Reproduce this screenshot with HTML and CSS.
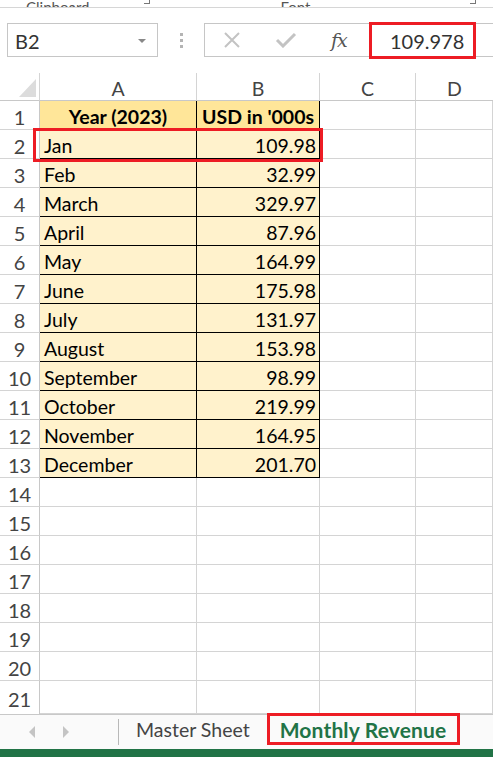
FILE: index.html
```html
<!DOCTYPE html>
<html lang="en">

<head>
   <meta charset="UTF-8">
   <meta name="viewport" content="width=device-width, initial-scale=1.0">
   <title>Monthly Revenue</title>

   <link rel="stylesheet" href="styles.css">
</head>

<body>
   <div class="ribbon">
      <span class="ribbon__label ribbon__clip">Clipboard</span>
      <span class="ribbon__launch ribbon__launch--1"></span>
      <span class="ribbon__label ribbon__font">Font</span>
      <span class="ribbon__launch ribbon__launch--2"></span>
   </div>

   <div class="formula">
      <div class="namebox">
         <span>B2</span>
         <span class="namebox__arrow"></span>
      </div>

      <div class="grip">
         <span></span><span></span><span></span>
      </div>

      <div class="formula__buttons">
         <svg class="formula__icon" width="20" height="16" viewBox="0 0 20 16">
            <path d="M3 1 L17 15 M17 1 L3 15" stroke="#c3c3c3" stroke-width="2" fill="none" />
         </svg>
         <svg class="formula__icon" width="22" height="16" viewBox="0 0 22 16">
            <path d="M2 8 L8 14 L20 2" stroke="#c3c3c3" stroke-width="3" fill="none" />
         </svg>
         <span class="formula__fx">fx</span>
      </div>

      <div class="formula__input">
         <span class="formula__value">109.978</span>
         <div class="mark mark--value"></div>
      </div>
   </div>

   <div class="sheet">
      <div class="corner">
         <svg width="17" height="18" viewBox="0 0 17 18">
            <polygon points="0,18 17,18 17,0" fill="#dcdcdc" />
         </svg>
      </div>
      <div class="col__head">A</div>
      <div class="col__head">B</div>
      <div class="col__head">C</div>
      <div class="col__head col__head--last">D</div>

      <div class="row__head">1</div>
      <div class="cell t th">Year (2023)</div>
      <div class="cell t th">USD in '000s</div>
      <div class="cell"></div>
      <div class="cell cell--last"></div>

      <div class="row__head">2</div>
      <div class="cell t">Jan</div>
      <div class="cell t num">109.98</div>
      <div class="cell"></div>
      <div class="cell cell--last"></div>

      <div class="row__head">3</div>
      <div class="cell t">Feb</div>
      <div class="cell t num">32.99</div>
      <div class="cell"></div>
      <div class="cell cell--last"></div>

      <div class="row__head">4</div>
      <div class="cell t">March</div>
      <div class="cell t num">329.97</div>
      <div class="cell"></div>
      <div class="cell cell--last"></div>

      <div class="row__head">5</div>
      <div class="cell t">April</div>
      <div class="cell t num">87.96</div>
      <div class="cell"></div>
      <div class="cell cell--last"></div>

      <div class="row__head">6</div>
      <div class="cell t">May</div>
      <div class="cell t num">164.99</div>
      <div class="cell"></div>
      <div class="cell cell--last"></div>

      <div class="row__head">7</div>
      <div class="cell t">June</div>
      <div class="cell t num">175.98</div>
      <div class="cell"></div>
      <div class="cell cell--last"></div>

      <div class="row__head">8</div>
      <div class="cell t">July</div>
      <div class="cell t num">131.97</div>
      <div class="cell"></div>
      <div class="cell cell--last"></div>

      <div class="row__head">9</div>
      <div class="cell t">August</div>
      <div class="cell t num">153.98</div>
      <div class="cell"></div>
      <div class="cell cell--last"></div>

      <div class="row__head">10</div>
      <div class="cell t">September</div>
      <div class="cell t num">98.99</div>
      <div class="cell"></div>
      <div class="cell cell--last"></div>

      <div class="row__head">11</div>
      <div class="cell t">October</div>
      <div class="cell t num">219.99</div>
      <div class="cell"></div>
      <div class="cell cell--last"></div>

      <div class="row__head">12</div>
      <div class="cell t">November</div>
      <div class="cell t num">164.95</div>
      <div class="cell"></div>
      <div class="cell cell--last"></div>

      <div class="row__head">13</div>
      <div class="cell t">December</div>
      <div class="cell t num">201.70</div>
      <div class="cell"></div>
      <div class="cell cell--last"></div>

      <div class="row__head">14</div>
      <div class="cell"></div><div class="cell"></div><div class="cell"></div><div class="cell cell--last"></div>
      <div class="row__head">15</div>
      <div class="cell"></div><div class="cell"></div><div class="cell"></div><div class="cell cell--last"></div>
      <div class="row__head">16</div>
      <div class="cell"></div><div class="cell"></div><div class="cell"></div><div class="cell cell--last"></div>
      <div class="row__head">17</div>
      <div class="cell"></div><div class="cell"></div><div class="cell"></div><div class="cell cell--last"></div>
      <div class="row__head">18</div>
      <div class="cell"></div><div class="cell"></div><div class="cell"></div><div class="cell cell--last"></div>
      <div class="row__head">19</div>
      <div class="cell"></div><div class="cell"></div><div class="cell"></div><div class="cell cell--last"></div>
      <div class="row__head">20</div>
      <div class="cell"></div><div class="cell"></div><div class="cell"></div><div class="cell cell--last"></div>
      <div class="row__head row__head--end">21</div>
      <div class="cell cell--end"></div><div class="cell cell--end"></div><div class="cell cell--end"></div><div class="cell cell--last cell--end"></div>

      <div class="mark mark--cell"></div>
   </div>

   <div class="tabs">
      <div class="tabs__nav">
         <span class="tabs__arrow tabs__arrow--left"></span>
         <span class="tabs__arrow tabs__arrow--right"></span>
      </div>
      <div class="tabs__sep"></div>
      <div class="tab">Master Sheet</div>
      <div class="tab tab--active">
         Monthly Revenue
         <div class="mark mark--tab"></div>
      </div>
   </div>

   <div class="status"></div>
</body>

</html>
```

FILE: styles.css
```css
* {
   box-sizing: border-box;
   margin: 0;
   padding: 0;
}

body {
   width: 493px;
   height: 757px;
   overflow: hidden;
   display: flex;
   flex-direction: column;
   background-color: #fff;
   font-family: "Lato", "Open Sans", sans-serif;
   color: #000;
}

/* ribbon leftover at the very top */
.ribbon {
   height: 8px;
   flex-shrink: 0;
   border-bottom: 1px solid #d6d6d6;
   overflow: hidden;
   display: flex;
   align-items: flex-end;
   color: #555;
   font-size: 15px;
}

.ribbon__label {
   line-height: 18px;
   margin-bottom: -9px;
}

.ribbon__clip {
   margin-left: 26px;
}

.ribbon__font {
   margin-left: 131px;
}

.ribbon__launch {
   width: 6px;
   height: 5px;
   border-right: 1px solid #777;
   border-bottom: 1px solid #777;
   margin-bottom: 3px;
}

.ribbon__launch--1 {
   margin-left: 54px;
}

.ribbon__launch--2 {
   margin-left: 160px;
}

/* name box + formula bar */
.formula {
   display: flex;
   align-items: flex-start;
   padding: 15px 0 0 7px;
   height: 49px;
   flex-shrink: 0;
}

.namebox {
   width: 151px;
   height: 34px;
   border: 1px solid #c6c6c6;
   display: flex;
   align-items: center;
   justify-content: space-between;
   padding: 2px 11px 0 7px;
   font-size: 20px;
   color: #333;
}

.namebox__arrow {
   border-left: 4px solid transparent;
   border-right: 4px solid transparent;
   border-top: 4px solid #888;
}

.grip {
   width: 46px;
   height: 34px;
   display: flex;
   flex-direction: column;
   align-items: center;
   justify-content: center;
   gap: 3px;
}

.grip span {
   width: 3px;
   height: 3px;
   background-color: #b4b4b4;
}

.formula__buttons {
   width: 165px;
   height: 34px;
   border: 1px solid #c6c6c6;
   border-right: none;
   display: flex;
   align-items: center;
   padding-left: 17px;
   gap: 33px;
}

.formula__fx {
   font-family: "DejaVu Serif", "Liberation Serif", serif;
   font-style: italic;
   font-size: 19px;
   color: #555;
   margin-left: 1px;
   letter-spacing: -1px;
}

.formula__input {
   position: relative;
   flex: 1;
   height: 34px;
   border: 1px solid #c6c6c6;
   border-right: none;
   display: flex;
   align-items: center;
   padding: 2px 0 0 20px;
   font-size: 20px;
   color: #333;
}

/* red annotation boxes */
.mark {
   position: absolute;
   border: 3px solid #ed1c24;
   pointer-events: none;
}

.mark--value {
   top: -2px;
   left: -1px;
   width: 107px;
   height: 37px;
}

.mark--cell {
   top: 55px;
   left: 33px;
   width: 290px;
   height: 34px;
}

.mark--tab {
   top: -4px;
   left: 0;
   width: 193px;
   height: 32px;
}

/* the grid */
.sheet {
   position: relative;
   flex: 1;
   margin-top: 16px;
   display: grid;
   grid-template-columns: 40px 157px 123px 96px 1fr;
   grid-template-rows: 28px repeat(20, 29px) 1fr;
   font-size: 19.5px;
}

.corner {
   border-right: 1px solid #d4d4d4;
   border-bottom: 1px solid #c8c8c8;
   display: flex;
   align-items: flex-end;
   justify-content: flex-end;
   padding: 0 3px 3px 0;
}

.col__head {
   border-right: 1px solid #d4d4d4;
   border-bottom: 1px solid #c8c8c8;
   display: flex;
   align-items: center;
   justify-content: center;
   padding-top: 4px;
   color: #444;
}

.col__head--last,
.cell--last {
   border-right: none;
}

.row__head {
   border-right: 1px solid #c8c8c8;
   border-bottom: 1px solid #d4d4d4;
   display: flex;
   align-items: center;
   justify-content: center;
   padding-top: 3px;
   color: #444;
   font-size: 20px;
}

.row__head--end,
.cell--end {
   border-bottom: none;
}

.cell {
   border-right: 1px solid #d4d4d4;
   border-bottom: 1px solid #d4d4d4;
   display: flex;
   align-items: center;
   padding: 3px 4px 0;
   white-space: nowrap;
}

.t {
   background-color: #fff2cc;
   border-color: #000;
}

.th {
   background-color: #ffe699;
   font-weight: 700;
   justify-content: center;
}

.num {
   justify-content: flex-end;
   padding-right: 3px;
}

/* sheet tabs */
.tabs {
   height: 35px;
   flex-shrink: 0;
   border-top: 1px solid #c8c8c8;
   background-color: #fafafa;
   display: flex;
   align-items: center;
}

.tabs__nav {
   width: 118px;
   display: flex;
   align-items: center;
   padding-left: 29px;
   gap: 28px;
}

.tabs__arrow {
   border-top: 6px solid transparent;
   border-bottom: 6px solid transparent;
}

.tabs__arrow--left {
   border-right: 6px solid #c4c4c4;
}

.tabs__arrow--right {
   border-left: 6px solid #c4c4c4;
}

.tabs__sep {
   width: 1px;
   height: 26px;
   background-color: #b8b8b8;
}

.tab {
   font-size: 19.5px;
   color: #444;
   padding: 0 0 6px 17px;
}

.tab--active {
   position: relative;
   margin-left: 17px;
   padding: 0 0 6px 13px;
   color: #217346;
   font-weight: 700;
   font-size: 21px;
   letter-spacing: 0.15px;
}

.status {
   height: 8px;
   flex-shrink: 0;
   background-color: #217346;
}
```
